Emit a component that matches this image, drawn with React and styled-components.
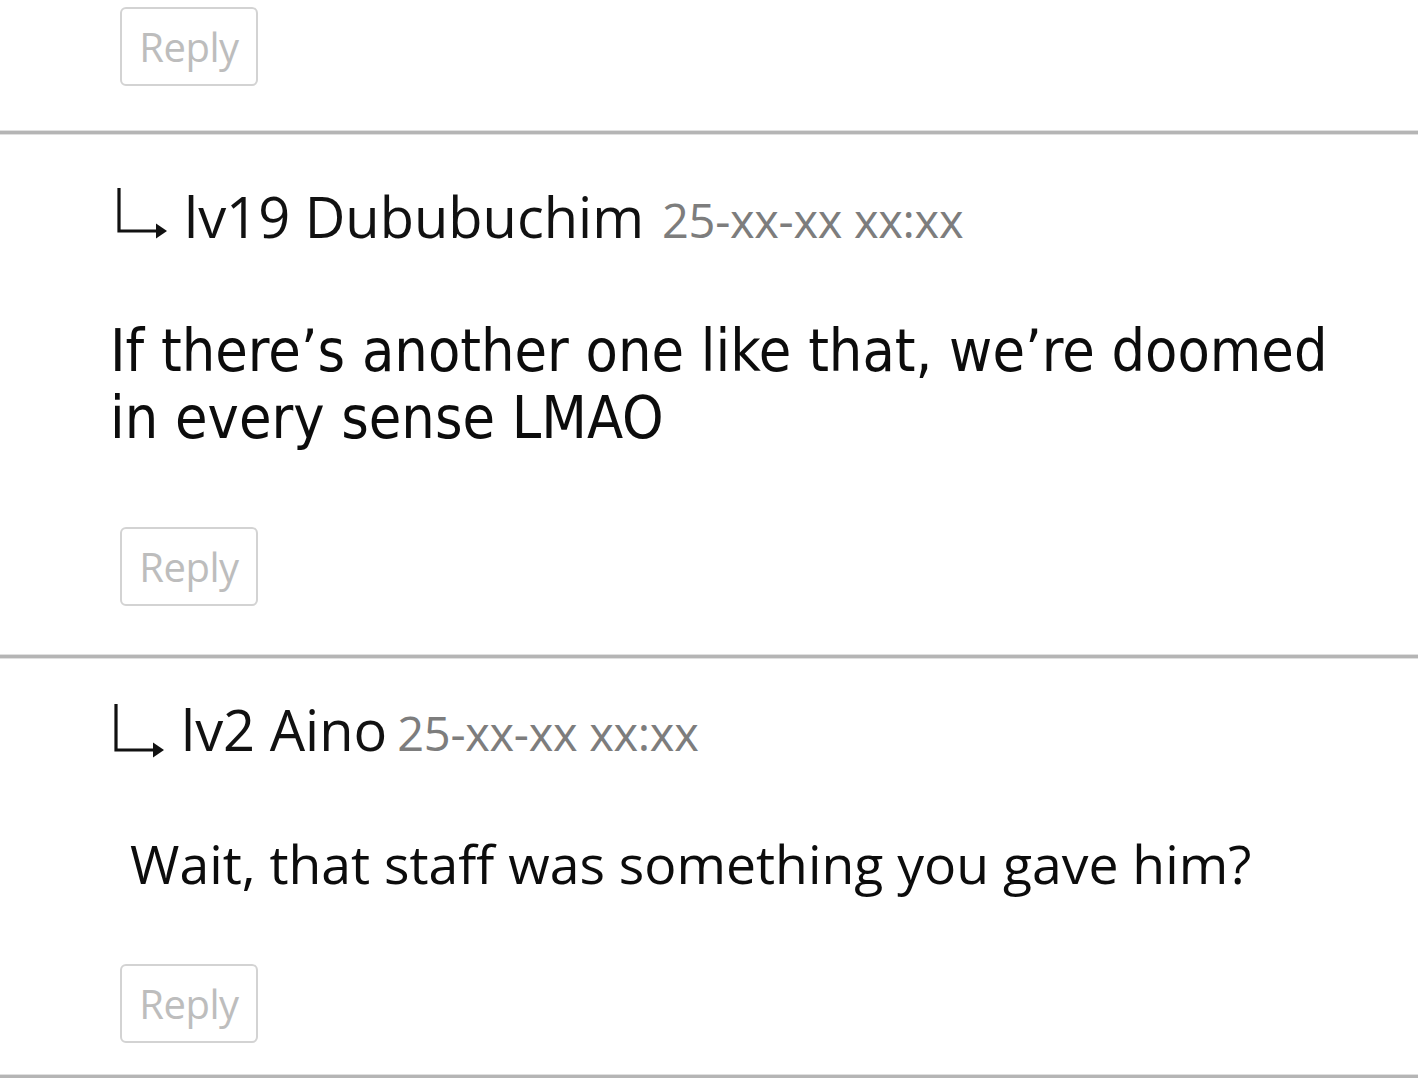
import React from "react";
import styled, { createGlobalStyle } from "styled-components";

const Global = createGlobalStyle`
  html, body { margin: 0; padding: 0; background: #ffffff; }
  body { font-family: "Open Sans", "Liberation Sans", sans-serif; color: #111; }
`;

const Page = styled.div`
  width: 1418px;
  display: flex;
  flex-direction: column;
`;

const Section = styled.section`
  display: flex;
  flex-direction: column;
  align-items: flex-start;
  padding: ${(p) => p.$pad};
`;

const Divider = styled.div`
  height: 3px;
  background: #b5b5b5;
  box-shadow: 0 1px 0 #e0e0e0, 0 -1px 0 #e0e0e0;
`;

const Header = styled.div`
  display: flex;
  align-items: baseline;
  margin-left: ${(p) => p.$indent}px;
  height: 60px;
  line-height: 60px;
`;

const ArrowIcon = styled.svg`
  width: 52px;
  height: ${(p) => p.$h}px;
  flex: none;
  margin-right: 16px;
  align-self: flex-end;
  position: relative;
  top: ${(p) => p.$drop}px;
`;

const Name = styled.span`
  font-family: "Open Sans", sans-serif;
  font-size: 56px;
  color: #111;
  white-space: nowrap;
`;

const Stamp = styled.span`
  font-family: "Open Sans", sans-serif;
  font-size: 47px;
  letter-spacing: -0.3px;
  color: #7d7d7d;
  margin-left: ${(p) => p.$gap}px;
  white-space: nowrap;
`;

const Body = styled.p`
  margin: ${(p) => p.$top}px 0 0 ${(p) => p.$indent}px;
  font-family: ${(p) => (p.$tahoma ? `"DejaVu Sans", "Noto Sans", sans-serif` : `"Open Sans", sans-serif`)};
  font-stretch: ${(p) => (p.$tahoma ? "semi-condensed" : "normal")};
  font-size: ${(p) => p.$size}px;
  line-height: 67px;
  color: #0c0c0c;
  width: ${(p) => p.$width}px;
`;

const ReplyButton = styled.button`
  box-sizing: border-box;
  margin: ${(p) => p.$top}px 0 0 120px;
  width: 138px;
  height: 79px;
  border: 2px solid #d3d3d3;
  border-radius: 6px;
  background: #ffffff;
  color: #bdbdbd;
  font-family: "Open Sans", sans-serif;
  font-size: 40px;
  letter-spacing: -0.5px;
  padding: 0;
  display: flex;
  align-items: center;
  justify-content: center;
`;

function Arrow({ drop = 0, h = 51 }) {
  const y = h - 8;
  return (
    <ArrowIcon viewBox={`0 0 52 ${h}`} $drop={drop} $h={h}>
      <path d={`M3 0 V${y} H42`} fill="none" stroke="#111" strokeWidth="3.2" />
      <polygon points={`40,${y - 7.5} 51,${y} 40,${y + 7.5}`} fill="#111" />
    </ArrowIcon>
  );
}

export default function App() {
  return (
    <>
      <Global />
      <Page>
        <Section $pad="7px 0 45px">
          <ReplyButton $top={0}>Reply</ReplyButton>
        </Section>
        <Divider />
        <Section $pad="52px 0 49px">
          <Header $indent={116}>
            <Arrow drop={-7} h={51} />
            <Name>lv19 Dububuchim</Name>
            <Stamp $gap={18}>25-xx-xx xx:xx</Stamp>
          </Header>
          <Body $top={71} $indent={110} $size={58.8} $width={1260} $tahoma>
            If there’s another one like that, we’re doomed in every sense LMAO
          </Body>
          <ReplyButton $top={76}>Reply</ReplyButton>
        </Section>
        <Divider />
        <Section $pad="41px 0 32px">
          <Header $indent={113}>
            <Arrow drop={-1} h={54} />
            <Name>lv2 Aino</Name>
            <Stamp $gap={10}>25-xx-xx xx:xx</Stamp>
          </Header>
          <Body $top={71} $indent={130} $size={53.5} $width={1260}>
            Wait, that staff was something you gave him?
          </Body>
          <ReplyButton $top={67}>Reply</ReplyButton>
        </Section>
        <Divider />
      </Page>
    </>
  );
}
